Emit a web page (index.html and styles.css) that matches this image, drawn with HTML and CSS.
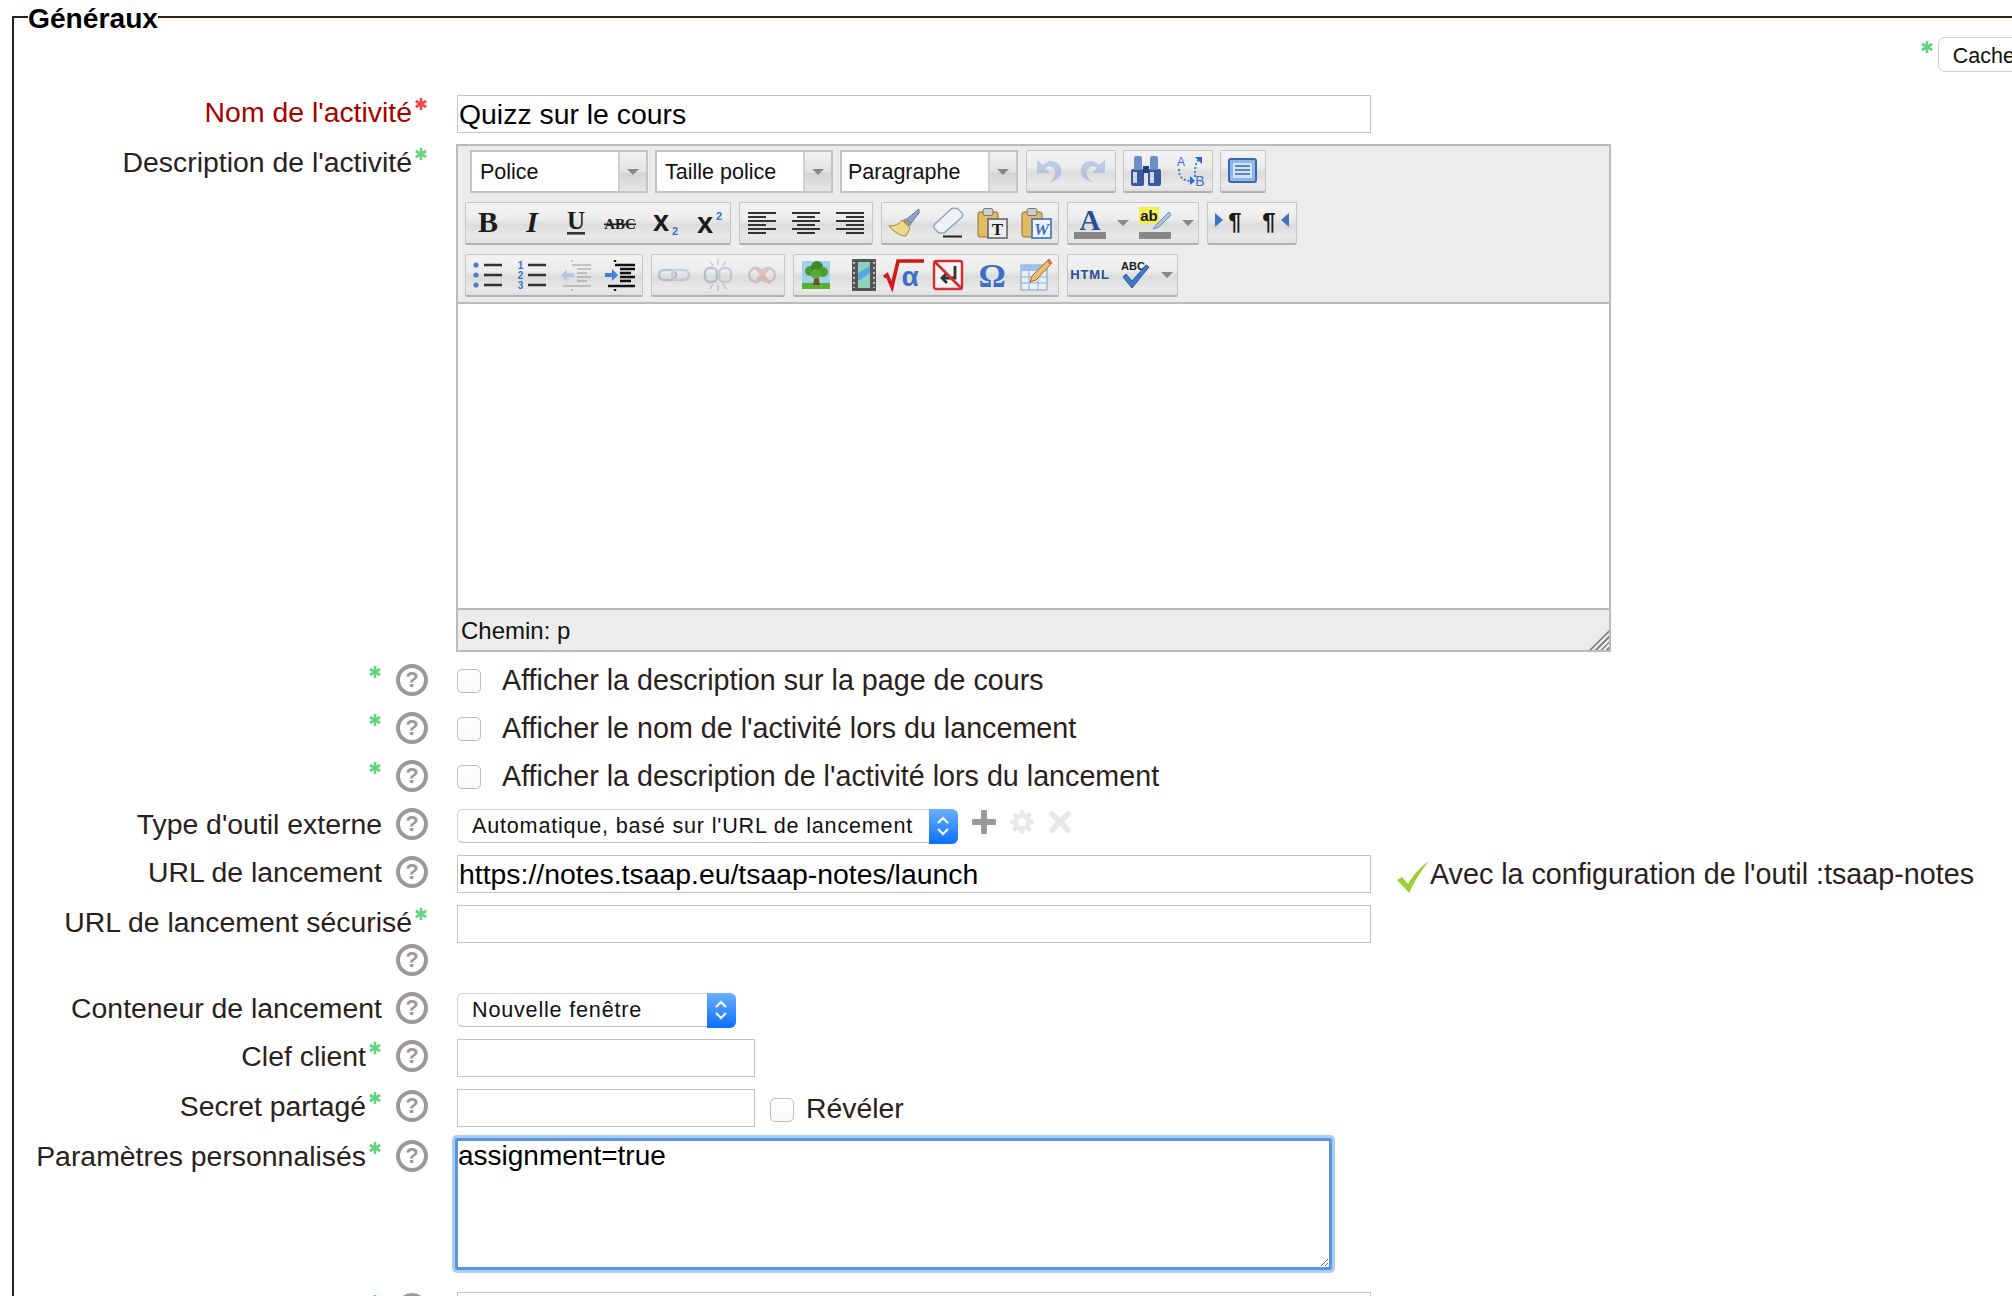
FILE: index.html
```html
<!DOCTYPE html>
<html lang="fr">
<head>
    <meta charset="UTF-8">
    <title>Généraux</title>
    <link rel="stylesheet" href="styles.css">
</head>
<body>
<svg class="defs" width="0" height="0">
    <symbol id="star" viewBox="0 0 14 14">
        <path d="M7 1v12M1.8 4l10.4 6M12.2 4L1.8 10" fill="none" stroke="currentColor" stroke-width="2.6"/>
    </symbol>
    <symbol id="i-left" viewBox="0 0 32 32"><path d="M2 6h28M2 10h18M2 14h28M2 18h18M2 22h28M2 26h18" stroke="#333" stroke-width="2.2"/></symbol>
    <symbol id="i-center" viewBox="0 0 32 32"><path d="M2 6h28M7 10h18M2 14h28M7 18h18M2 22h28M7 26h18" stroke="#333" stroke-width="2.2"/></symbol>
    <symbol id="i-right" viewBox="0 0 32 32"><path d="M2 6h28M12 10h18M2 14h28M12 18h18M2 22h28M12 26h18" stroke="#333" stroke-width="2.2"/></symbol>
    <symbol id="i-brush" viewBox="0 0 32 32">
        <path d="M31 2L19 12l4 4L31 6z" fill="#8fa6c8" stroke="#56709a"/>
        <path d="M18 11l6 6-3 3-7-6z" fill="#999"/>
        <path d="M14 13l8 8-4 8c-6 0-12-4-17-10 5 0 10-1 13-6z" fill="#ecd98a" stroke="#a08a3a"/>
    </symbol>
    <symbol id="i-eraser" viewBox="0 0 32 32">
        <path d="M19 2L3 17c-2 2-1 5 1 6l3 3h5L30 10c1-2 1-3 0-4l-4-4c-2-1-5-1-7 0z" fill="#eef2f7" stroke="#8da3bd" stroke-width="1.4"/>
        <path d="M11 29.5h19" stroke="#222" stroke-width="2"/>
    </symbol>
    <symbol id="i-clip" viewBox="0 0 32 32">
        <rect x="2" y="5" width="20" height="25" rx="2" fill="#e2bc62" stroke="#94702a"/>
        <rect x="7" y="1.5" width="10" height="7" rx="2" fill="#cfcfcf" stroke="#777"/>
    </symbol>
    <symbol id="i-bullist" viewBox="0 0 32 32">
        <circle cx="4" cy="6" r="2.6" fill="#4a7fd0"/><circle cx="4" cy="16" r="2.6" fill="#4a7fd0"/><circle cx="4" cy="26" r="2.6" fill="#4a7fd0"/>
        <path d="M12 6h18M12 16h18M12 26h18" stroke="#333" stroke-width="2.4"/>
    </symbol>
    <symbol id="i-indent" viewBox="0 0 32 32">
        <path d="M11 1v2M11 6h20M16 10h15M16 14h11M16 18h15M16 22h11M4 27h27M11 30v2" stroke="#111" stroke-width="2.4"/>
        <path d="M1 14h7v-4l6 6-6 6v-4H1z" fill="#3f7fe0"/>
    </symbol>
    <symbol id="i-outdent" viewBox="0 0 32 32">
        <path d="M12 1v2M12 6h19M17 10h14M17 14h10M17 18h14M17 22h10M3 27h28M12 30v2" stroke="#777" stroke-width="2.2"/>
        <path d="M14 14H7v-4l-6 6 6 6v-4h7z" fill="#6d9be6"/>
    </symbol>
    <symbol id="i-link" viewBox="0 0 32 32">
        <rect x="1" y="11" width="17" height="10" rx="5" fill="none" stroke="#5f7da8" stroke-width="2.4"/>
        <rect x="14" y="11" width="17" height="10" rx="5" fill="none" stroke="#8da0b8" stroke-width="2.4"/>
    </symbol>
    <symbol id="i-unlink" viewBox="0 0 32 32">
        <rect x="3" y="9" width="12" height="14" rx="5" fill="none" stroke="#5f7da8" stroke-width="2.4"/>
        <rect x="17" y="9" width="12" height="14" rx="5" fill="none" stroke="#8da0b8" stroke-width="2.4"/>
        <path d="M16 0v6M16 26v6M8 2l3 5M24 2l-3 5M8 30l3-5M24 30l-3-5" stroke="#777" stroke-width="1.4"/>
    </symbol>
    <symbol id="i-anchor" viewBox="0 0 32 32">
        <circle cx="10" cy="16" r="7" fill="none" stroke="#8a8a9a" stroke-width="2.4"/>
        <circle cx="22" cy="16" r="7" fill="none" stroke="#8a8a9a" stroke-width="2.4"/>
        <path d="M9 8l15 16M24 8L9 24" stroke="#e06a6a" stroke-width="3"/>
    </symbol>
    <symbol id="i-image" viewBox="0 0 32 32">
        <rect x="2" y="2" width="28" height="28" fill="#9fd0ee"/>
        <rect x="2" y="24" width="28" height="6" fill="#58b030"/>
        <path d="M15 16h3l2 10h-7z" fill="#7a4a22"/>
        <circle cx="10" cy="12" r="5" fill="#4a9a2c"/><circle cx="17" cy="8" r="6" fill="#3c8a26"/><circle cx="23" cy="13" r="5" fill="#4a9a2c"/><circle cx="16" cy="15" r="5" fill="#5aa834"/>
    </symbol>
    <symbol id="i-media" viewBox="0 0 32 32">
        <rect x="8" y="0" width="24" height="32" fill="#555"/>
        <rect x="14" y="3" width="12" height="26" fill="#8fd0c0"/>
        <path d="M14 14l12-7v7l-12 8z" fill="#58a8e0"/>
        <path d="M10 3v26M30 3v26" stroke="#bbb" stroke-width="2" stroke-dasharray="2 3"/>
    </symbol>
    <symbol id="i-nbsp" viewBox="0 0 32 32">
        <rect x="2" y="2" width="28" height="28" rx="2" fill="#f4f4f4" stroke="#d03030" stroke-width="2.4"/>
        <path d="M23 7v12H11M15 14l-5 5 5 5" fill="none" stroke="#333" stroke-width="2.8"/>
        <path d="M3 3l26 26" stroke="#d03030" stroke-width="2.6"/>
    </symbol>
    <symbol id="i-table" viewBox="0 0 32 32">
        <rect x="1" y="6" width="26" height="25" fill="#e8f0fa" stroke="#7f9cc0"/>
        <rect x="1" y="6" width="26" height="6" fill="#9cc0ec"/>
        <path d="M1 18h26M1 24h26M9 12v19M18 12v19" stroke="#8fa8c8"/>
        <path d="M29 0l3 4-16 17-6 2 2-6z" fill="#ecc070" stroke="#a06a2a"/>
        <path d="M29 0l3 4-2 2-3-4z" fill="#e07060"/>
    </symbol>
    <symbol id="i-undo" viewBox="0 0 32 32">
        <path d="M4 5v13h13l-5-5c4-3 9-1 10 3 1 4-1 8-6 11 8-1 13-6 12-13-1-8-12-11-18-4z" fill="#5f8fd6"/>
    </symbol>
    <symbol id="i-redo" viewBox="0 0 32 32">
        <path d="M28 5v13H15l5-5c-4-3-9-1-10 3-1 4 1 8 6 11-8-1-13-6-12-13 1-8 12-11 18-4z" fill="#5f8fd6"/>
    </symbol>
    <symbol id="i-search" viewBox="0 0 32 32">
        <rect x="1" y="14" width="13" height="17" rx="2" fill="#385a9a"/>
        <rect x="18" y="14" width="13" height="17" rx="2" fill="#385a9a"/>
        <rect x="4" y="1" width="8" height="14" rx="2" fill="#6d8fc8"/>
        <rect x="20" y="1" width="8" height="14" rx="2" fill="#6d8fc8"/>
        <rect x="13" y="11" width="6" height="7" fill="#24417a"/>
        <rect x="3" y="17" width="4" height="11" fill="#c8d8ee"/><rect x="20" y="17" width="4" height="11" fill="#c8d8ee"/>
    </symbol>
    <symbol id="i-full" viewBox="0 0 32 32">
        <rect x="2" y="4" width="27" height="23" rx="2" fill="#8fb4ec" stroke="#3a66b0" stroke-width="2"/>
        <rect x="6" y="8" width="19" height="15" fill="#d4e2f6"/>
        <path d="M8 11h15M8 15h15M8 19h15" stroke="#3a66b0" stroke-width="1.6"/>
    </symbol>
    <symbol id="chevrons" viewBox="0 0 16 24">
        <path d="M3 9l5-5 5 5M3 15l5 5 5-5" fill="none" stroke="#fff" stroke-width="2.2"/>
    </symbol>
    <symbol id="i-plus" viewBox="0 0 24 24"><path d="M12 2v20M2 12h20" stroke="currentColor" stroke-width="6" stroke-linecap="round"/></symbol>
    <symbol id="i-x" viewBox="0 0 24 24"><path d="M4 4l16 16M20 4L4 20" stroke="currentColor" stroke-width="6" stroke-linecap="round"/></symbol>
    <symbol id="i-gear" viewBox="0 0 24 24">
        <circle cx="12" cy="12" r="6.5" fill="none" stroke="currentColor" stroke-width="5"/>
        <path d="M12 0v5M12 19v5M0 12h5M19 12h5M3.5 3.5l3.5 3.5M17 17l3.5 3.5M20.5 3.5L17 7M7 17l-3.5 3.5" stroke="currentColor" stroke-width="4"/>
    </symbol>
    <symbol id="i-check" viewBox="0 0 26 32" preserveAspectRatio="none">
        <path d="M0 19l4-3 5 7C13 14 19 6 26 0 20 9 14 20 10 32z" fill="#9bd132"/>
    </symbol>
</svg>

<fieldset class="general">
    <legend>Généraux</legend>

    <div class="advanced">
        <svg class="star star-green star-adv"><use href="#star"/></svg>
        <button class="adv-btn" type="button">Cacher</button>
    </div>

    <div class="row">
        <label class="lbl lbl-req">Nom de l'activité<svg class="star star-red"><use href="#star"/></svg></label>
        <div class="field"><input class="txt txt-wide" value="Quizz sur le cours"></div>
    </div>

    <div class="row row-editor">
        <label class="lbl">Description de l'activité<svg class="star star-green"><use href="#star"/></svg></label>
        <div class="field field-flush">
            <div class="editor">
                <div class="toolbar">
                    <div class="tb-row tb-first">
                        <div class="tb-select"><span class="tb-val">Police</span><span class="tb-arrow"><i class="tri"></i></span></div>
                        <div class="tb-select"><span class="tb-val">Taille police</span><span class="tb-arrow"><i class="tri"></i></span></div>
                        <div class="tb-select"><span class="tb-val tb-val-para">Paragraphe</span><span class="tb-arrow"><i class="tri"></i></span></div>
                        <div class="tb-group tb-gap">
                            <span class="btn off"><svg><use href="#i-undo"/></svg></span>
                            <span class="btn off"><svg><use href="#i-redo"/></svg></span>
                        </div>
                        <div class="tb-group">
                            <span class="btn"><svg><use href="#i-search"/></svg></span>
                            <span class="btn"><svg viewBox="0 0 32 32">
                                <text x="7" y="11" class="ic-sans ic-blue" font-size="12">A</text>
                                <text x="26" y="31" class="ic-sans ic-blue" font-size="14">B</text>
                                <path d="M5 14c0 8 3 11 11 12M21 22c0-9 0-13 4-18" fill="none" stroke="#3f78cc" stroke-width="2" stroke-dasharray="2 2"/>
                                <path d="M16 21l5 5-5 4z" fill="#2a6ad0"/>
                                <path d="M21 2h7v7z" fill="#2a6ad0"/>
                            </svg></span>
                        </div>
                        <div class="tb-group">
                            <span class="btn"><svg><use href="#i-full"/></svg></span>
                        </div>
                    </div>
                    <div class="tb-row">
                        <div class="tb-group">
                            <span class="btn"><svg viewBox="0 0 32 32"><text x="16" y="25" class="ic-serif" font-size="30" font-weight="bold">B</text></svg></span>
                            <span class="btn"><svg viewBox="0 0 32 32"><text x="16" y="25" class="ic-serif" font-size="30" font-weight="bold" font-style="italic">I</text></svg></span>
                            <span class="btn"><svg viewBox="0 0 32 32"><text x="16" y="22" class="ic-serif" font-size="25" font-weight="bold">U</text><rect x="7" y="25" width="18" height="2.6" fill="#333"/></svg></span>
                            <span class="btn"><svg viewBox="0 0 32 32"><text x="16" y="22" class="ic-serif" font-size="15" font-weight="bold">ABC</text><rect x="0" y="16.5" width="32" height="1.6" fill="#222"/></svg></span>
                            <span class="btn"><svg viewBox="0 0 32 32"><text x="13" y="24" class="ic-sans" font-size="29" font-weight="bold">x</text><text x="27" y="28" class="ic-sans ic-blue" font-size="11" font-weight="bold">2</text></svg></span>
                            <span class="btn"><svg viewBox="0 0 32 32"><text x="13" y="26" class="ic-sans" font-size="29" font-weight="bold">x</text><text x="27" y="13" class="ic-sans ic-blue" font-size="11" font-weight="bold">2</text></svg></span>
                        </div>
                        <div class="tb-group">
                            <span class="btn"><svg><use href="#i-left"/></svg></span>
                            <span class="btn"><svg><use href="#i-center"/></svg></span>
                            <span class="btn"><svg><use href="#i-right"/></svg></span>
                        </div>
                        <div class="tb-group">
                            <span class="btn"><svg><use href="#i-brush"/></svg></span>
                            <span class="btn"><svg><use href="#i-eraser"/></svg></span>
                            <span class="btn"><svg viewBox="0 0 32 32">
                                <use href="#i-clip" width="32" height="32"/>
                                <rect x="12" y="12" width="19" height="19" fill="#eee" stroke="#666" stroke-width="1.6"/>
                                <text x="21.5" y="27.5" class="ic-serif" font-size="17" font-weight="bold">T</text>
                            </svg></span>
                            <span class="btn"><svg viewBox="0 0 32 32">
                                <use href="#i-clip" width="32" height="32"/>
                                <rect x="12" y="12" width="19" height="19" fill="#eef3fb" stroke="#3f6fc0" stroke-width="1.6"/>
                                <text x="21.5" y="27.5" class="ic-serif ic-blue" font-size="17" font-weight="bold" font-style="italic">W</text>
                            </svg></span>
                        </div>
                        <div class="tb-group">
                            <span class="btn"><svg viewBox="0 0 32 32">
                                <text x="16" y="23" class="ic-serif ic-navy" font-size="29" font-weight="bold">A</text>
                                <rect x="0" y="25" width="32" height="7" fill="#888"/>
                            </svg></span><span class="btn-more"><i class="tri"></i></span>
                            <span class="btn"><svg viewBox="0 0 32 32">
                                <rect x="0" y="0" width="20" height="17" fill="#f4ee52"/>
                                <text x="10" y="14" class="ic-sans" font-size="15" font-weight="bold">ab</text>
                                <path d="M30 5l-12 12-4 5 6-2L32 8z" fill="#a8c4e8" stroke="#6d8cb8"/>
                                <rect x="0" y="25" width="32" height="7" fill="#888"/>
                            </svg></span><span class="btn-more"><i class="tri"></i></span>
                        </div>
                        <div class="tb-group">
                            <span class="btn"><svg viewBox="0 0 32 32">
                                <path d="M1 6l8 7-8 7z" fill="#3d72c4"/>
                                <text x="21" y="23" class="ic-sans" font-size="24" font-weight="bold">¶</text>
                            </svg></span>
                            <span class="btn"><svg viewBox="0 0 32 32">
                                <text x="11" y="23" class="ic-sans" font-size="24" font-weight="bold">¶</text>
                                <path d="M31 6l-8 7 8 7z" fill="#3d72c4"/>
                            </svg></span>
                        </div>
                    </div>
                    <div class="tb-row">
                        <div class="tb-group">
                            <span class="btn"><svg><use href="#i-bullist"/></svg></span>
                            <span class="btn"><svg viewBox="0 0 32 32">
                                <text x="4.5" y="10" class="ic-sans ic-blue" font-size="10" font-weight="bold">1</text>
                                <text x="4.5" y="20" class="ic-sans ic-blue" font-size="10" font-weight="bold">2</text>
                                <text x="4.5" y="30" class="ic-sans ic-blue" font-size="10" font-weight="bold">3</text>
                                <path d="M12 6h18M12 16h18M12 26h18" stroke="#333" stroke-width="2.4"/>
                            </svg></span>
                            <span class="btn off"><svg><use href="#i-outdent"/></svg></span>
                            <span class="btn"><svg><use href="#i-indent"/></svg></span>
                        </div>
                        <div class="tb-group">
                            <span class="btn off"><svg><use href="#i-link"/></svg></span>
                            <span class="btn off"><svg><use href="#i-unlink"/></svg></span>
                            <span class="btn off"><svg><use href="#i-anchor"/></svg></span>
                        </div>
                        <div class="tb-group">
                            <span class="btn"><svg><use href="#i-image"/></svg></span>
                            <span class="btn"><svg><use href="#i-media"/></svg></span>
                            <span class="btn"><svg class="ic-wide" viewBox="0 0 40 32">
                                <path d="M0 18l3-2 5 12L14 2h26" fill="none" stroke="#d01818" stroke-width="3.6"/>
                                <text x="26" y="27" class="ic-sans ic-blue" font-size="28" font-weight="bold">α</text>
                            </svg></span>
                            <span class="btn"><svg><use href="#i-nbsp"/></svg></span>
                            <span class="btn"><svg viewBox="0 0 32 32"><text x="16" y="28" class="ic-serif ic-blue" font-size="34" font-weight="bold">Ω</text></svg></span>
                            <span class="btn"><svg><use href="#i-table"/></svg></span>
                        </div>
                        <div class="tb-group">
                            <span class="btn"><svg class="ic-wide" viewBox="0 0 40 32"><text x="20" y="20" class="ic-sans ic-navy" font-size="13" font-weight="bold" letter-spacing=".8">HTML</text></svg></span>
                            <span class="btn"><svg viewBox="0 0 32 32">
                                <text x="15" y="11" class="ic-sans" font-size="11" font-weight="bold">ABC</text>
                                <path d="M5 18l9 11L31 8l-3-2-14 16-6-7z" fill="#3f78cc" stroke="#2a5aa0"/>
                            </svg></span><span class="btn-more"><i class="tri"></i></span>
                        </div>
                    </div>
                </div>
                <div class="ed-body"></div>
                <div class="ed-status">
                    <span>Chemin: p</span>
                    <span class="grip"></span>
                </div>
            </div>
        </div>
    </div>

    <div class="row">
        <div class="lbl"><svg class="star star-green"><use href="#star"/></svg><span class="help">?</span></div>
        <label class="field check-line"><input class="check" type="checkbox">Afficher la description sur la page de cours</label>
    </div>
    <div class="row">
        <div class="lbl"><svg class="star star-green"><use href="#star"/></svg><span class="help">?</span></div>
        <label class="field check-line"><input class="check" type="checkbox">Afficher le nom de l'activité lors du lancement</label>
    </div>
    <div class="row">
        <div class="lbl"><svg class="star star-green"><use href="#star"/></svg><span class="help">?</span></div>
        <label class="field check-line"><input class="check" type="checkbox">Afficher la description de l'activité lors du lancement</label>
    </div>

    <div class="row">
        <label class="lbl">Type d'outil externe<span class="help">?</span></label>
        <div class="field select-line">
            <div class="select sel-type"><span class="sel-val">Automatique, basé sur l'URL de lancement</span><span class="sel-arrow"><svg><use href="#chevrons"/></svg></span></div>
            <svg class="tool tool-on"><use href="#i-plus"/></svg>
            <svg class="tool tool-off"><use href="#i-gear"/></svg>
            <svg class="tool tool-off"><use href="#i-x"/></svg>
        </div>
    </div>

    <div class="row">
        <label class="lbl">URL de lancement<span class="help">?</span></label>
        <div class="field url-line">
            <input class="txt txt-wide" value="https://notes.tsaap.eu/tsaap-notes/launch">
            <svg class="check-ok"><use href="#i-check"/></svg>
            <span>Avec la configuration de l'outil :tsaap-notes</span>
        </div>
    </div>

    <div class="row">
        <label class="lbl">URL de lancement sécurisé<svg class="star star-green"><use href="#star"/></svg><span class="help">?</span></label>
        <div class="field"><input class="txt txt-wide"></div>
    </div>

    <div class="row">
        <label class="lbl">Conteneur de lancement<span class="help">?</span></label>
        <div class="field select-line">
            <div class="select sel-win"><span class="sel-val">Nouvelle fenêtre</span><span class="sel-arrow"><svg><use href="#chevrons"/></svg></span></div>
        </div>
    </div>

    <div class="row">
        <label class="lbl">Clef client<svg class="star star-green"><use href="#star"/></svg><span class="help">?</span></label>
        <div class="field"><input class="txt txt-short"></div>
    </div>

    <div class="row">
        <label class="lbl">Secret partagé<svg class="star star-green"><use href="#star"/></svg><span class="help">?</span></label>
        <label class="field reveal-line"><input class="txt txt-short"><input class="check" type="checkbox">Révéler</label>
    </div>

    <div class="row row-area">
        <label class="lbl">Paramètres personnalisés<svg class="star star-green"><use href="#star"/></svg><span class="help">?</span></label>
        <div class="field"><textarea class="area">assignment=true</textarea></div>
    </div>

    <div class="row">
        <div class="lbl"><svg class="star star-green"><use href="#star"/></svg><span class="help help-empty"></span></div>
        <div class="field"><input class="txt txt-wide"></div>
    </div>
</fieldset>
</body>
</html>
```

FILE: styles.css
```css
html, body { margin: 0; padding: 0; background: #fff; overflow: hidden; }
body { height: 1296px; font-family: "Liberation Sans", Arial, sans-serif; font-size: 28.4px; color: #2b211c; }
.defs { display: block; height: 0; }

/* svg text helpers */
.ic-serif { font-family: "Liberation Serif", serif; fill: #1c1c1c; text-anchor: middle; }
.ic-sans { font-family: "Liberation Sans", sans-serif; fill: #1c1c1c; text-anchor: middle; }
.ic-blue { fill: #3a70c8; }
.ic-navy { fill: #274f94; }

.general { width: 2060px; box-sizing: border-box; margin: 0 0 0 12px; padding: 0 0 60px; border: 2px solid #2b211c; min-width: 0; }
.general legend { margin-left: 14px; padding: 2px 0 0; font-size: 28.2px; font-weight: bold; color: #000; line-height: 32px; }

.advanced { display: flex; justify-content: flex-end; align-items: flex-start; margin: 3px 0 21px; padding-right: 33px; height: 35px; }
.adv-btn { height: 35px; padding: 3px 14px 0; font: 21.5px "Liberation Sans", sans-serif; color: #111; background: #fff; border: 1px solid #ccc; border-radius: 7px; margin-left: 4px; }

.row { display: flex; margin-bottom: 10px; }
.row-editor { margin-bottom: 9px; }
.row-area { margin-bottom: 20px; }
.lbl { display: block; width: 395px; margin-left: 19px; flex: none; text-align: right; line-height: 38px; }
.lbl-req { color: #a00; }
.field { margin-left: 29px; flex: none; padding-top: 2px; }
.field-flush { padding-top: 1px; margin-left: 28px; }

.star { width: 14px; height: 14px; vertical-align: 11px; margin-left: 2px; filter: blur(.3px); }
.star-green { color: #62d37e; }
.star-red { color: #f2484f; }
.star-adv { margin-top: 3px; }
.help { display: inline-block; box-sizing: border-box; width: 32px; height: 32px; margin: 3px 0 3px 14px; border: 4px solid #999; border-radius: 50%; vertical-align: top; text-align: center; font: bold 22px/24px "Liberation Sans", sans-serif; color: #999; }

.txt { display: block; box-sizing: border-box; height: 38px; padding: 0 1px; border: 1.5px solid #c4c4c4; background: #fff; font: 28.4px "Liberation Sans", sans-serif; color: #000; outline: none; }
.txt-wide { width: 914px; }
.txt-short { width: 298px; }

.check { appearance: none; box-sizing: border-box; width: 24px; height: 24px; margin: 2px 0 0; border: 1.5px solid #bdbdbd; border-radius: 5px; background: linear-gradient(#fff, #f8f8f8); flex: none; }
.check-line { display: flex; align-items: center; height: 38px; padding-top: 0; gap: 21px; font-size: 28.7px; }

.select-line { display: flex; align-items: flex-start; padding-top: 4px; gap: 14px; }
.select { display: flex; box-sizing: border-box; height: 34px; border: 1.5px solid #d2d2d2; border-bottom-color: #bbb; border-radius: 6px; background: #fff; font: 21.6px "Liberation Sans", sans-serif; color: #111; letter-spacing: .8px; }
.sel-type { width: 500px; }
.sel-win { width: 278px; }
.sel-val { flex: 1; line-height: 31px; padding-left: 14px; white-space: nowrap; }
.sel-arrow { width: 29px; margin: -1.5px -1.5px -1.5px 0; display: flex; align-items: center; justify-content: center; background: linear-gradient(#6cb0ff, #0a6eff); border-radius: 0 6px 6px 0; }
.sel-arrow svg { width: 16px; height: 24px; }
.tool { width: 24px; height: 24px; margin-top: 1px; }
.tool-on { color: #999; margin-left: 1px; }
.tool-off { color: #e8e8e8; }

.url-line { display: flex; align-items: center; height: 38px; font-size: 28.7px; }
.check-ok { width: 32px; height: 32px; margin: 6px 1px 0 26px; flex: none; }

.reveal-line { display: flex; align-items: center; }
.reveal-line .check { margin: 3px 12px 0 15px; }

.area { display: block; box-sizing: border-box; width: 877px; height: 132px; padding: 0; margin: -1px 0 0 -2px; border: 3px solid #5b95e0; border-radius: 2px; box-shadow: 0 0 0 3px #a9cef9; font: 28px "Liberation Sans", sans-serif; color: #000; outline: none; line-height: 30px; }

/* rich text editor */
.editor { display: flex; flex-direction: column; box-sizing: border-box; width: 1155px; height: 508px; border: 2px solid #bbb; background: #ececec; color: #111; }
.toolbar { padding: 4px 0 5px 7px; border-bottom: 2px solid #bbb; }
.tb-row { display: flex; gap: 8px; height: 43px; margin-bottom: 9px; }
.tb-row:last-child { margin-bottom: 0; }
.tb-first { margin-left: 5px; gap: 7px; }
.tb-gap { margin-left: 1px; }
.tb-select { display: flex; box-sizing: border-box; width: 178px; height: 43px; border: 2px solid #c4c4c4; background: #fff; font-size: 21.5px; }
.tb-val { flex: 1; line-height: 40px; padding-left: 8px; white-space: nowrap; }
.tb-val-para { padding-left: 6px; }
.tb-arrow { width: 26px; display: flex; align-items: center; justify-content: center; border-left: 2px solid #d0d0d0; background: linear-gradient(#f2f2f2, #e2e2e2 50%, #d4d4d4 55%, #e6e6e6); }
.tri { display: block; width: 0; height: 0; border: 6px solid transparent; border-top: 6px solid #888; border-bottom: 0; }

.tb-group { display: flex; height: 43px; box-sizing: border-box; border: 1px solid #c6c6c6; border-bottom: 2px solid #b0b0b0; border-radius: 2px; background: linear-gradient(#f3f3f3, #ececec 40%, #dcdcdc 55%, #e9e9e9 85%, #e0e0e0); }
.btn { width: 44px; display: flex; align-items: center; justify-content: center; }
.btn svg { width: 32px; height: 32px; overflow: visible; }
.btn svg.ic-wide { width: 40px; }
.btn.off svg { opacity: .35; }
.btn-more { width: 21px; display: flex; align-items: center; justify-content: center; }

.ed-body { flex: 1; background: #fff; }
.ed-status { display: flex; justify-content: space-between; height: 40px; border-top: 2px solid #bbb; font-size: 24px; line-height: 42px; padding-left: 3px; }
.grip { align-self: flex-end; width: 20px; height: 20px; background: repeating-linear-gradient(135deg, transparent 0 2px, #888 2px 4px); clip-path: polygon(100% 0, 100% 100%, 0 100%); }
```
